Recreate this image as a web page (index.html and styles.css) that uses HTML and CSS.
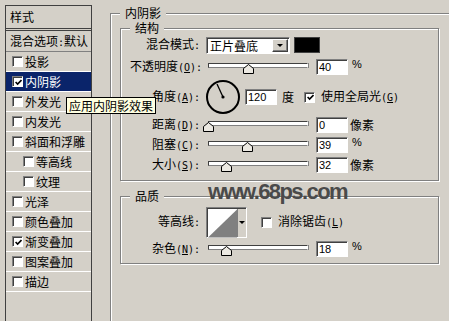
FILE: index.html
```html
<!DOCTYPE html>
<html lang="zh-CN">

<head>
    <meta charset="UTF-8">
    <title>图层样式</title>
    <link rel="stylesheet" href="styles.css">
</head>

<body>
    <div class="dialog">
        <!-- 左侧样式列表 -->
        <div class="style-list">
            <div class="list-head">样式</div>
            <div class="list-blend">混合选项<span class="en">:</span>默认</div>
            <div class="list-item"><span class="check"></span>投影</div>
            <div class="list-item selected"><span class="check"><svg width="7" height="7" viewBox="0 0 7 7"><path d="M0.6 3 L2.6 5 L6.5 1" /></svg></span>内阴影</div>
            <div class="list-item"><span class="check"></span>外发光</div>
            <div class="list-item"><span class="check"></span>内发光</div>
            <div class="list-item"><span class="check"></span>斜面和浮雕</div>
            <div class="list-item sub"><span class="check"></span>等高线</div>
            <div class="list-item sub"><span class="check"></span>纹理</div>
            <div class="list-item"><span class="check"></span>光泽</div>
            <div class="list-item"><span class="check"></span>颜色叠加</div>
            <div class="list-item"><span class="check"><svg width="7" height="7" viewBox="0 0 7 7"><path d="M0.6 3 L2.6 5 L6.5 1" /></svg></span>渐变叠加</div>
            <div class="list-item"><span class="check"></span>图案叠加</div>
            <div class="list-item"><span class="check"></span>描边</div>
        </div>

        <!-- 右侧参数 -->
        <fieldset class="group effect">
            <legend>内阴影</legend>

            <fieldset class="group structure">
                <legend>结构</legend>
                <div class="row">
                    <span class="lbl">混合模式<span class="en">:</span></span>
                    <div class="select">
                        <span class="select-text">正片叠底</span>
                        <span class="drop"></span>
                    </div>
                    <div class="swatch"></div>
                </div>
                <div class="row gap">
                    <span class="lbl">不透明度<span class="en">(<u>O</u>):</span></span>
                    <div class="slider"><div class="track"></div><svg class="thumb" style="left:40%" width="11" height="10" viewBox="0 0 11 10"><path d="M0.5 9.5 V4.5 L5.5 0.5 L10.5 4.5 V9.5 Z" /></svg></div>
                    <input class="num" type="text" value="40">
                    <span class="pct">%</span>
                </div>
                <div class="row gap angle">
                    <span class="lbl">角度<span class="en">(<u>A</u>):</span></span>
                    <svg class="dial" width="36" height="36" viewBox="0 0 36 36">
                        <circle cx="18" cy="18" r="16" fill="none" stroke="#000" stroke-width="2" />
                        <line x1="18" y1="18" x2="12" y2="5" stroke="#000" stroke-width="1.3" />
                        <circle cx="18" cy="18" r="1.6" fill="#000" />
                    </svg>
                    <input class="num dial-num" type="text" value="120">
                    <span class="unit deg">度</span>
                    <span class="check global"><svg width="7" height="7" viewBox="0 0 7 7"><path d="M0.6 3 L2.6 5 L6.5 1" /></svg></span>
                    <span>使用全局光<span class="en">(<u>G</u>)</span></span>
                </div>
                <div class="row">
                    <span class="lbl">距离<span class="en">(<u>D</u>):</span></span>
                    <div class="slider"><div class="track"></div><svg class="thumb" style="left:0%" width="11" height="10" viewBox="0 0 11 10"><path d="M0.5 9.5 V4.5 L5.5 0.5 L10.5 4.5 V9.5 Z" /></svg></div>
                    <input class="num" type="text" value="0">
                    <span class="unit">像素</span>
                </div>
                <div class="row">
                    <span class="lbl">阻塞<span class="en">(<u>C</u>):</span></span>
                    <div class="slider"><div class="track"></div><svg class="thumb" style="left:39%" width="11" height="10" viewBox="0 0 11 10"><path d="M0.5 9.5 V4.5 L5.5 0.5 L10.5 4.5 V9.5 Z" /></svg></div>
                    <input class="num" type="text" value="39">
                    <span class="pct">%</span>
                </div>
                <div class="row">
                    <span class="lbl">大小<span class="en">(<u>S</u>):</span></span>
                    <div class="slider"><div class="track"></div><svg class="thumb" style="left:18%" width="11" height="10" viewBox="0 0 11 10"><path d="M0.5 9.5 V4.5 L5.5 0.5 L10.5 4.5 V9.5 Z" /></svg></div>
                    <input class="num" type="text" value="32">
                    <span class="unit">像素</span>
                </div>
            </fieldset>

            <fieldset class="group quality">
                <legend>品质</legend>
                <div class="row gap contour-row">
                    <span class="lbl">等高线<span class="en">:</span></span>
                    <div class="contour">
                        <svg class="curve" width="30" height="29" viewBox="0 0 30 29"><path d="M0 29 L30 0 V29 Z" /></svg>
                        <span class="drop"></span>
                    </div>
                    <span class="check aa"></span>
                    <span>消除锯齿<span class="en">(<u>L</u>)</span></span>
                </div>
                <div class="row">
                    <span class="lbl">杂色<span class="en">(<u>N</u>):</span></span>
                    <div class="slider"><div class="track"></div><svg class="thumb" style="left:18%" width="11" height="10" viewBox="0 0 11 10"><path d="M0.5 9.5 V4.5 L5.5 0.5 L10.5 4.5 V9.5 Z" /></svg></div>
                    <input class="num" type="text" value="18">
                    <span class="pct">%</span>
                </div>
            </fieldset>
        </fieldset>

        <div class="watermark">www.68ps.com</div>
        <div class="tooltip">应用内阴影效果</div>
    </div>
</body>

</html>
```

FILE: styles.css
```css
*{
    margin: 0;
    padding: 0;
    box-sizing: border-box;
}
body{
    background: #d4d0c8;
    font: 12px/20px "Noto Sans CJK SC", sans-serif;
    color: #000;
    overflow: hidden;
}
.en{
    font-family: "DejaVu Sans Mono", monospace;
    font-size: 10px;
}
.dialog{
    position: relative;
    display: flex;
    align-items: flex-start;
    width: 449px;
    height: 321px;
    padding: 5px 0 0 5px;
    overflow: hidden;
}

/* 样式列表 */
.style-list{
    flex-shrink: 0;
    width: 87px;
    height: 340px;
    border: 1px solid #404040;
}
.list-head{
    height: 25px;
    line-height: 22px;
    padding-left: 4px;
    border-bottom: 3px double #404040;
}
.list-blend{
    height: 21px;
    line-height: 20px;
    padding-left: 4px;
    border-bottom: 1px solid #808080;
}
.list-item{
    display: flex;
    align-items: center;
    height: 20px;
    line-height: 19px;
    padding-left: 6px;
    border-bottom: 1px solid #fff;
}
.list-item.sub{
    padding-left: 17px;
}
.list-item.selected{
    background: #0a246a;
    color: #fff;
}
.check{
    display: flex;
    align-items: center;
    justify-content: center;
    flex-shrink: 0;
    width: 11px;
    height: 11px;
    margin-right: 2px;
    background: #fff;
    border: 1px solid;
    border-color: #808080 #fff #fff #808080;
    box-shadow: inset 1px 1px #404040;
}
.check svg{
    margin: 1px 0 0 1px;
}
.check path{
    fill: none;
    stroke: #000;
    stroke-width: 1.6;
}

/* 分组框 */
.group{
    min-width: 0;
    padding: 0 9px;
    border: 1px solid #808080;
    box-shadow: inset 1px 1px #fff, 1px 1px #fff;
}
.group legend{
    padding: 0 5px;
    line-height: 14px;
    background: #d4d0c8;
}
.effect{
    flex-shrink: 0;
    width: 400px;
    height: 340px;
    margin: 1px 0 0 18px;
}
.structure{
    width: 319px;
    margin-top: 1px;
    padding-bottom: 5px;
}
.quality{
    width: 319px;
    margin-top: 8px;
    padding-bottom: 4px;
}

.row{
    display: flex;
    align-items: center;
    height: 20px;
    white-space: nowrap;
}
.row.gap{
    margin-top: 2px;
}
.row.angle{
    height: 36px;
}
.row.contour-row{
    height: 34px;
}
.lbl{
    flex-shrink: 0;
    width: 70px;
    margin-right: 6px;
    text-align: right;
}

.select{
    display: flex;
    width: 84px;
    height: 17px;
    padding: 1px;
    background: #fff;
    border: 1px solid;
    border-color: #808080 #fff #fff #808080;
    box-shadow: inset 1px 1px #404040;
}
.select-text{
    flex: 1;
    padding-left: 2px;
    line-height: 14px;
}
.drop{
    display: flex;
    align-items: center;
    justify-content: center;
    width: 16px;
    background: #d4d0c8;
    border: 1px solid;
    border-color: #fff #404040 #404040 #fff;
    box-shadow: inset -1px -1px #808080;
}
.drop::after{
    content: "";
    border-left: 3px solid transparent;
    border-right: 3px solid transparent;
    border-top: 3px solid #000;
}
.swatch{
    width: 26px;
    height: 16px;
    margin-left: 4px;
    background: #000;
    border: 1px solid #404040;
}

.slider{
    position: relative;
    flex-shrink: 0;
    width: 100px;
    height: 20px;
    margin-left: 2px;
}
.track{
    height: 5px;
    margin-top: 6px;
    background: #fff;
    border: 1px solid;
    border-color: #404040 #fff #808080 #404040;
    box-shadow: 1px 0 #808080;
}
.thumb{
    position: absolute;
    top: 7px;
    margin-left: -5px;
}
.thumb path{
    fill: #ece9e2;
    stroke: #000;
    stroke-width: 1;
}

.num{
    flex-shrink: 0;
    width: 32px;
    height: 16px;
    margin-left: 8px;
    padding: 0 0 0 2px;
    font: 11px/14px "Liberation Sans", Arial, sans-serif;
    color: #000;
    background: #fff;
    border: 1px solid;
    border-color: #808080 #fff #fff #808080;
    box-shadow: inset 1px 1px #404040;
    outline: none;
}
.pct{
    margin: 0 0 6px 4px;
    font: 11px/12px "Liberation Sans", Arial, sans-serif;
}
.unit{
    margin-left: 2px;
}

.dial{
    flex-shrink: 0;
    margin-left: -1px;
}
.num.dial-num{
    margin-left: 4px;
}
.unit.deg{
    margin-left: 5px;
}
.check.global{
    margin: 0 6px 0 10px;
}

.contour{
    display: flex;
    width: 41px;
    height: 31px;
    padding: 1px 0 0 1px;
    background: #fff;
    border: 1px solid;
    border-color: #808080 #fff #fff #808080;
    box-shadow: inset 1px 1px #404040;
}
.curve path{
    fill: #808080;
}
.contour .drop{
    width: 9px;
    border-width: 0 0 0 1px;
    border-color: #808080;
    box-shadow: none;
}
.check.aa{
    margin: 0 6px 0 14px;
}

.watermark{
    position: absolute;
    left: 208px;
    top: 181px;
    font: bold 22px/22px "Liberation Sans", Arial, sans-serif;
    letter-spacing: -1.6px;
    color: #4a4a4a;
}
.tooltip{
    position: absolute;
    left: 66px;
    top: 97px;
    z-index: 2;
    padding: 0 2px;
    line-height: 15px;
    background: #ffffe1;
    border: 1px solid #000;
}
```
